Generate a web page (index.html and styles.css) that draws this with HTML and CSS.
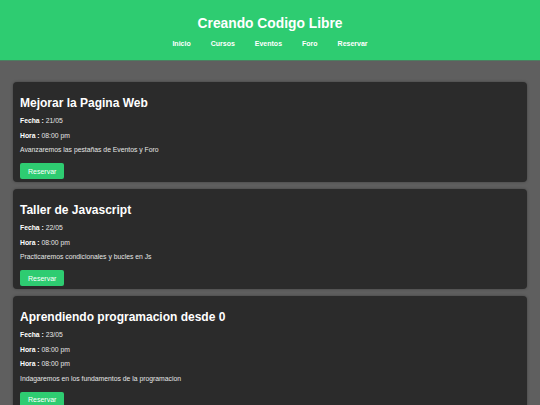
FILE: index.html
```html
<!DOCTYPE html>
<html lang="es">
<head>
  <meta charset="UTF-8" />
  <title>Creando Codigo Libre</title>
  <link rel="stylesheet" href="styles.css">
</head>
<body>

<header class="site-header">
  <h1>Creando Codigo Libre</h1>
  <nav class="main-nav">
    <a href="#">Inicio</a>
    <a href="#">Cursos</a>
    <a href="#">Eventos</a>
    <a href="#">Foro</a>
    <a href="#">Reservar</a>
  </nav>
</header>

<main class="events">

  <div class="event-card">
    <h2>Mejorar la Pagina Web</h2>
    <p><strong>Fecha :</strong> 21/05</p>
    <p><strong>Hora :</strong> 08:00 pm</p>
    <p>Avanzaremos las pestañas de Eventos y Foro</p>
    <button class="btn-reservar">Reservar</button>
  </div>

  <div class="event-card">
    <h2>Taller de Javascript</h2>
    <p><strong>Fecha :</strong> 22/05</p>
    <p><strong>Hora :</strong> 08:00 pm</p>
    <p>Practicaremos condicionales y bucles en Js</p>
    <button class="btn-reservar">Reservar</button>
  </div>

  <div class="event-card">
    <h2>Aprendiendo programacion desde 0</h2>
    <p><strong>Fecha :</strong> 23/05</p>
    <p><strong>Hora :</strong> 08:00 pm</p>
    <p><strong>Hora :</strong> 08:00 pm</p>
    <p>Indagaremos en los fundamentos de la programacion</p>
    <button class="btn-reservar">Reservar</button>
  </div>

</main>

</body>
</html>
```

FILE: styles.css
```css
body {
  font-family: "Liberation Sans", Arial, sans-serif;
  background-color: #5f5f5f;
  color: #fff;
  margin: 0;
}

.site-header {
  background-color: #2ecc71;
  text-align: center;
  padding: 16px 0 12px;
  border-bottom: 1px solid #4b7f60;
}

.site-header h1 {
  margin: 0 0 8px;
  font-size: 13.8px;
  line-height: 16px;
  font-weight: bold;
}

/* Nav links in one centered row */
.main-nav {
  display: flex;
  justify-content: center;
  gap: 20px;
  line-height: 8px;
}

.main-nav a {
  color: #fff;
  text-decoration: none;
  font-size: 7px;
  font-weight: bold;
}

.events {
  padding: 21px 13px;
  display: flex;
  flex-direction: column;
  gap: 7px;
}

.event-card {
  background: #2b2b2b;
  border-radius: 4px;
  padding: 14px 7px 3px;
  box-shadow: 0 0 3px rgba(0, 0, 0, 0.3);
}

.event-card h2 {
  margin: 0 0 7px;
  font-size: 12px;
  line-height: 14px;
}

.event-card p {
  margin: 0 0 6.5px;
  font-size: 6.8px;
  line-height: 8px;
  color: #e6e6e6;
}

.event-card strong {
  color: #fff;
}

/* block button, so its top margin folds into the paragraph's */
.btn-reservar {
  display: block;
  background-color: #2ecc71;
  color: #fff;
  border: none;
  border-radius: 2px;
  height: 16px;
  padding: 0 8px;
  margin-top: 9px;
  font-family: inherit;
  font-size: 7px;
  cursor: pointer;
}
```
